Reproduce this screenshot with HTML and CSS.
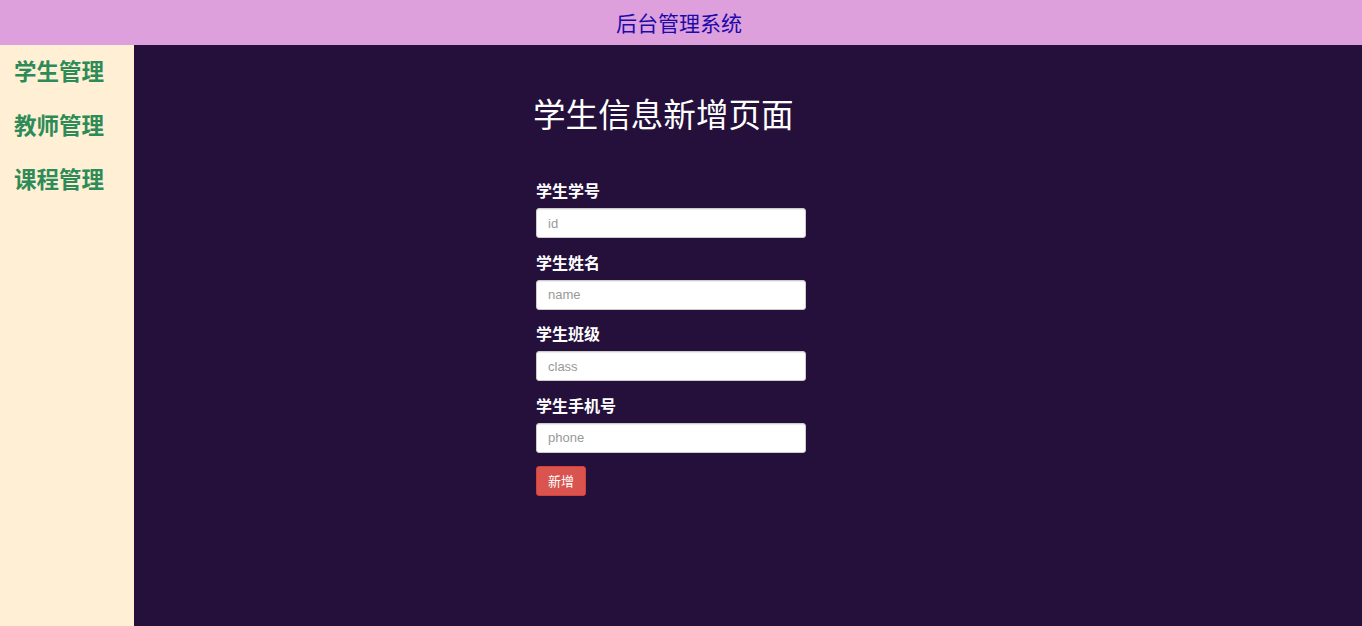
FILE: index.html
```html
<!DOCTYPE html>
<html lang="zh">
<head>
<meta charset="utf-8">
<title>后台管理系统</title>
<link rel="stylesheet" href="styles.css">
</head>
<body>
<header class="topbar">后台管理系统</header>
<div class="layout">
  <nav class="sidebar">
    <a class="nav-item" href="#">学生管理</a>
    <a class="nav-item" href="#">教师管理</a>
    <a class="nav-item" href="#">课程管理</a>
  </nav>
  <main class="content">
    <h1 class="page-title">学生信息新增页面</h1>
    <form class="form">
      <div class="form-group">
        <label class="form-label" for="sid">学生学号</label>
        <input class="form-input" id="sid" type="text" placeholder="id">
      </div>
      <div class="form-group">
        <label class="form-label" for="sname">学生姓名</label>
        <input class="form-input" id="sname" type="text" placeholder="name">
      </div>
      <div class="form-group">
        <label class="form-label" for="sclass">学生班级</label>
        <input class="form-input" id="sclass" type="text" placeholder="class">
      </div>
      <div class="form-group">
        <label class="form-label" for="sphone">学生手机号</label>
        <input class="form-input" id="sphone" type="text" placeholder="phone">
      </div>
      <button class="btn-danger" type="button">新增</button>
    </form>
  </main>
</div>
</body>
</html>
```
FILE: styles.css
```css
* { box-sizing: border-box; }
html, body { margin: 0; padding: 0; height: 100%; }
body {
  font-family: "Liberation Sans", "Noto Sans CJK SC", sans-serif;
  font-size: 14px;
  display: flex;
  flex-direction: column;
  overflow: hidden;
}
.topbar {
  height: 45px;
  line-height: 45px;
  padding-right: 4px;
  background: #dda0dd;
  color: #1e0aa8;
  text-align: center;
  font-size: 21px;
  font-family: "Noto Sans CJK SC", sans-serif;
  flex: none;
}
.layout {
  flex: 1;
  display: flex;
  min-height: 0;
}
.sidebar {
  width: 134px;
  flex: none;
  background: #ffefd5;
  padding: 10px 0 0 14px;
  display: flex;
  flex-direction: column;
  gap: 24px;
}
.nav-item {
  font-family: "Noto Sans CJK SC", sans-serif;
  font-size: 22.5px;
  line-height: 30px;
  font-weight: bold;
  color: #2e8b57;
  text-decoration: none;
}
.content {
  flex: 1;
  background: #24103a;
  padding: 50px 0 0 401px;
}
.page-title {
  margin: 0 0 49px -2px;
  font-family: "Noto Sans CJK SC", sans-serif;
  font-weight: normal;
  font-size: 32.6px;
  line-height: 36px;
  color: #fff;
}
.form {
  width: 270px;
  margin-left: 1px;
}
.form-group {
  margin-bottom: 13.5px;
}
.form-label {
  display: block;
  font-family: "Noto Sans CJK SC", sans-serif;
  font-size: 16px;
  line-height: 20px;
  font-weight: bold;
  color: #fff;
  margin-bottom: 8px;
}
.form-input {
  display: block;
  width: 270px;
  height: 30px;
  padding: 5px 11px;
  font-family: "Liberation Sans", sans-serif;
  font-size: 13px;
  color: #555;
  background: #fff;
  border: 1px solid #ccc;
  border-radius: 3px;
  box-shadow: inset 0 1px 1px rgba(0,0,0,.075);
  outline: none;
}
.form-input::placeholder { color: #999; }
.btn-danger {
  display: block;
  height: 30px;
  margin-top: 1px;
  padding: 5px 11px;
  font-family: "Noto Sans CJK SC", sans-serif;
  font-size: 13px;
  line-height: 18px;
  color: #fff;
  background: #d9534f;
  border: 1px solid #d43f3a;
  border-radius: 3px;
  cursor: pointer;
}
```
